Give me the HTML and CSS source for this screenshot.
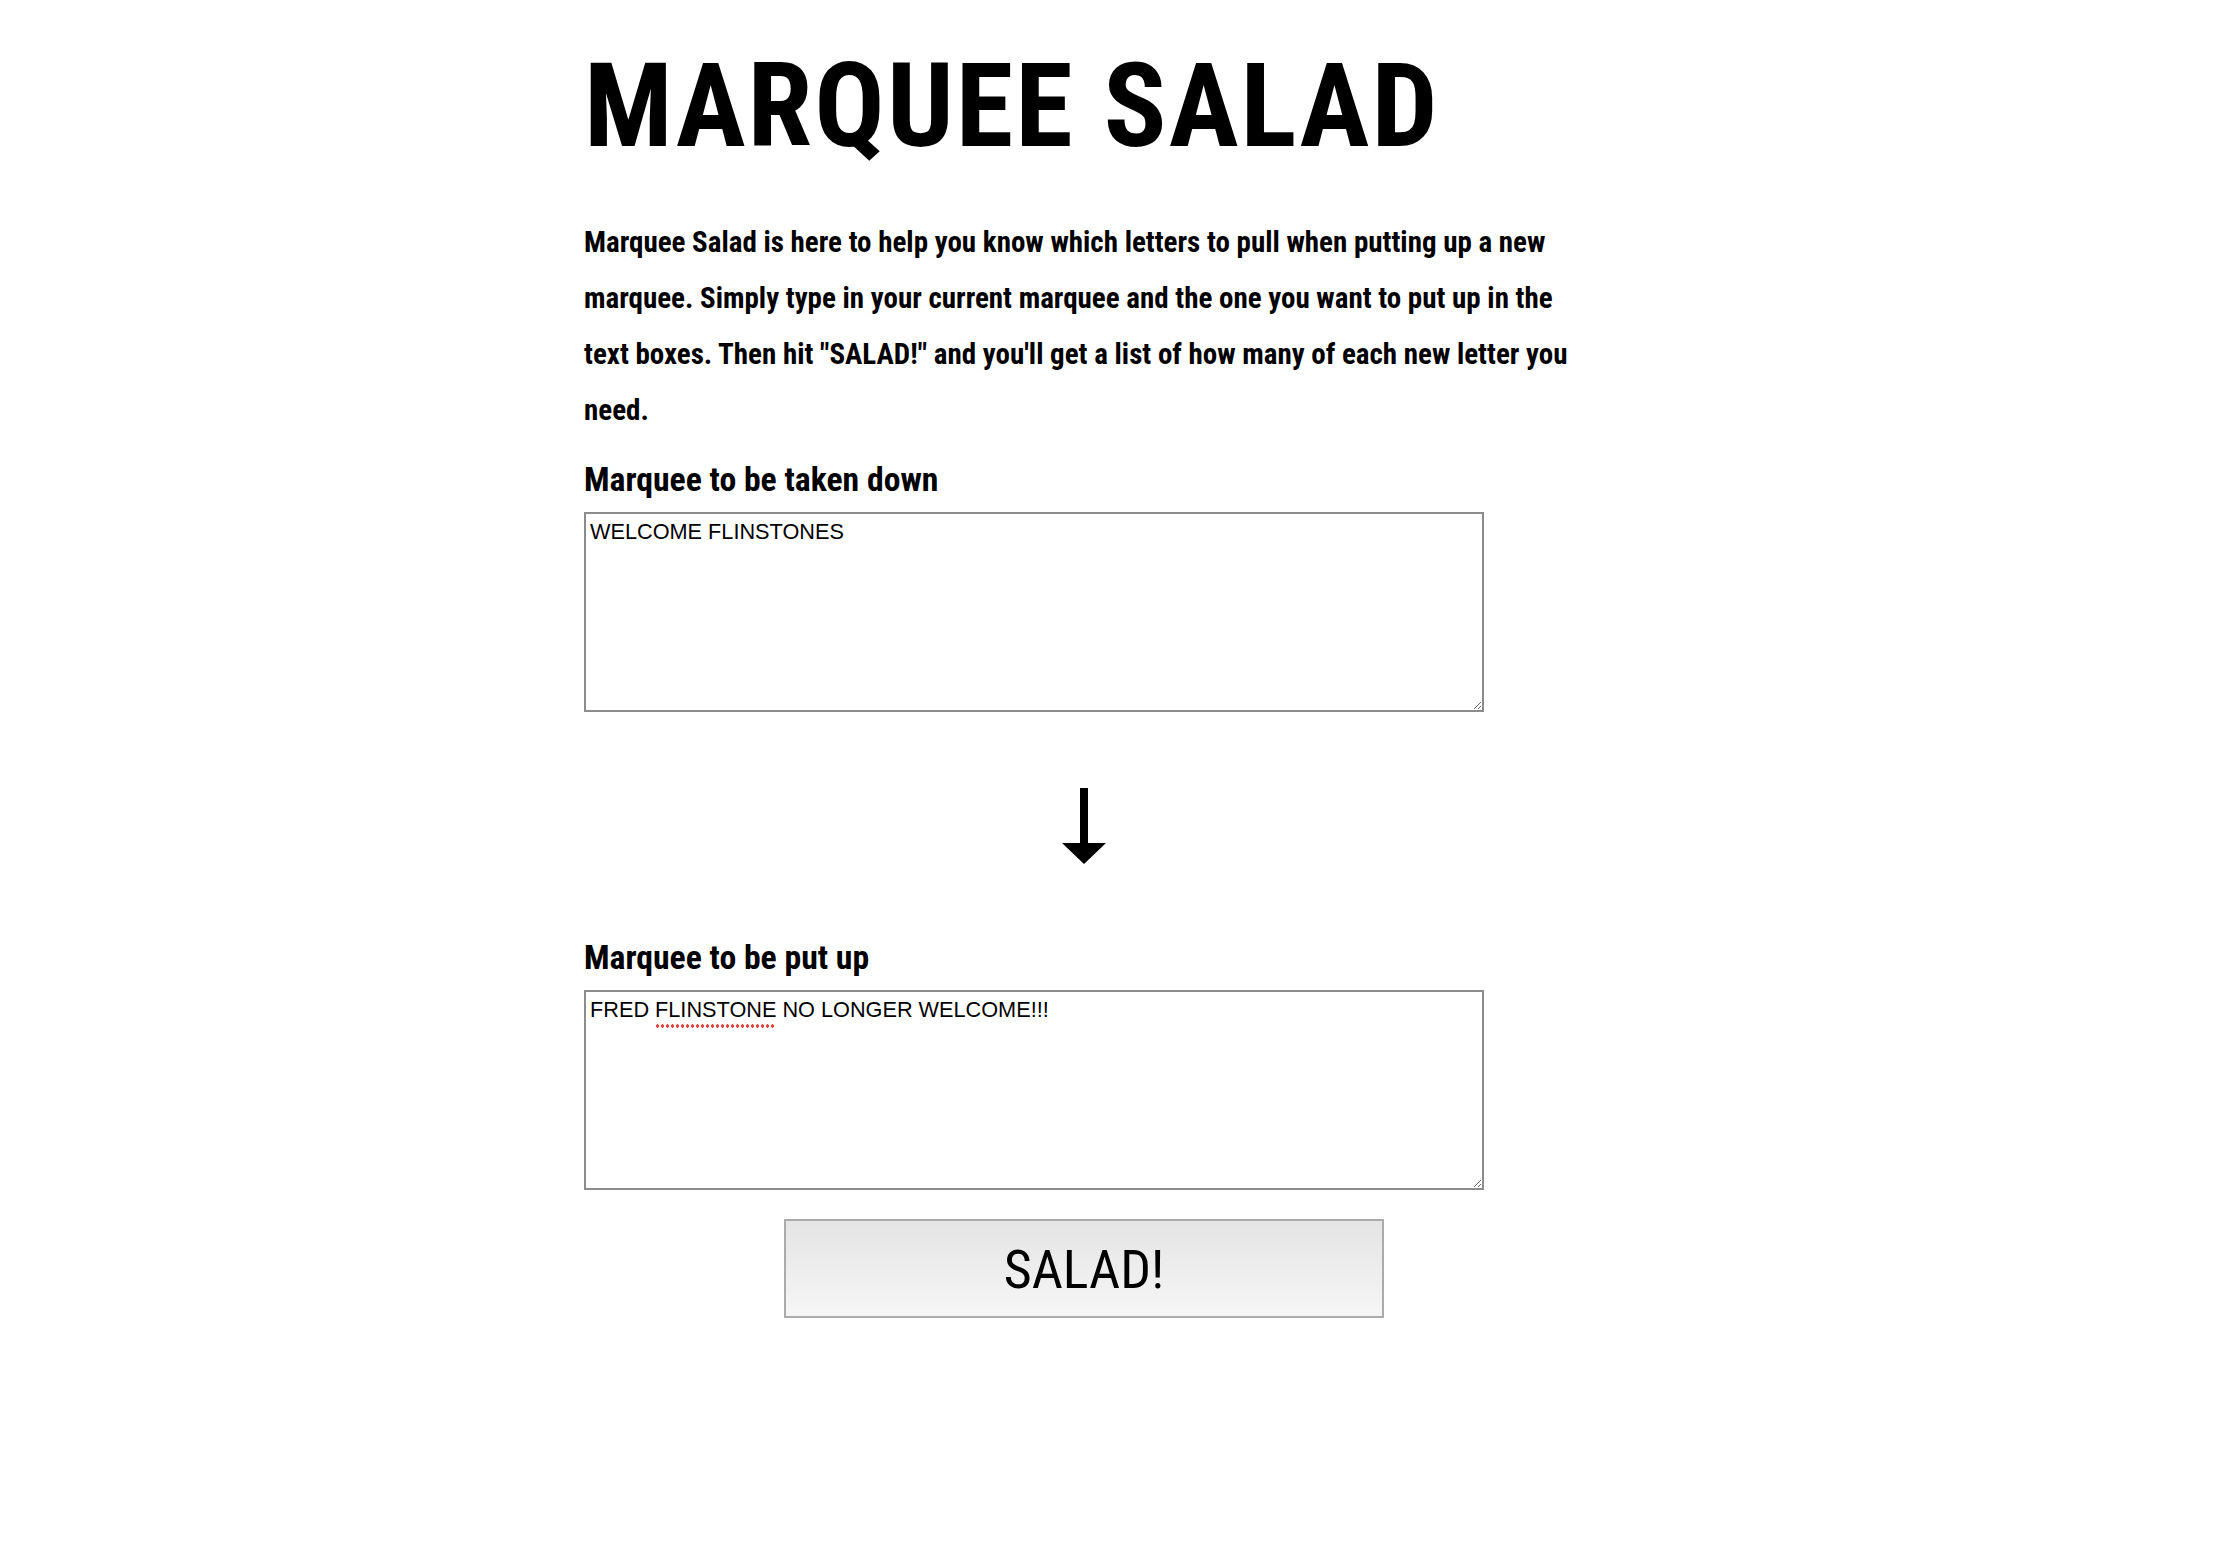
FILE: index.html
```html
<!DOCTYPE html>
<html lang="en">
<head>
<meta charset="utf-8">
<title>Marquee Salad</title>
<link rel="stylesheet" href="styles.css">
</head>
<body>
<main class="page">
  <h1 class="title">MARQUEE SALAD</h1>
  <p class="intro">Marquee Salad is here to help you know which letters to pull when putting up a new marquee. Simply type in your current marquee and the one you want to put up in the text boxes. Then hit "SALAD!" and you'll get a list of how many of each new letter you need.</p>

  <h2 class="label label-first">Marquee to be taken down</h2>
  <div class="box-wrap">
    <textarea class="box" spellcheck="false">WELCOME FLINSTONES</textarea>
  </div>

  <svg class="arrow" width="44" height="76" viewBox="0 0 44 76" aria-hidden="true">
    <rect x="18" y="0" width="8" height="56" fill="#000"/>
    <polygon points="0,55 44,55 22,76" fill="#000"/>
  </svg>

  <h2 class="label label-second">Marquee to be put up</h2>
  <div class="box-wrap">
    <textarea class="box" spellcheck="false">FRED FLINSTONE NO LONGER WELCOME!!!</textarea>
    <div class="spell-overlay" aria-hidden="true"><span class="ghost">FRED </span><span class="ghost misspelled">FLINSTONE</span></div>
  </div>

  <div class="actions">
    <button class="salad" type="button">SALAD!</button>
  </div>
</main>
</body>
</html>
```

FILE: styles.css
```css
html, body {
  margin: 0;
  padding: 0;
  background: #fff;
  color: #000;
}

.page {
  width: 1000px;
  margin-left: 584px;
  font-family: "Roboto Condensed", "Liberation Sans Narrow", "DejaVu Sans Condensed", sans-serif;
}

.title {
  margin: 48px 0 0 0;
  font-size: 117px;
  line-height: 117px;
  font-weight: 700;
  letter-spacing: 2px;
}

.intro {
  width: 1010px;
  margin: 49px 0 0 0;
  font-size: 29px;
  line-height: 56px;
  font-weight: 700;
}

.label {
  margin: 0;
  font-size: 33.7px;
  line-height: 40px;
  font-weight: 700;
}

.label-first {
  margin-top: 22px;
}

.label-second {
  margin-top: 74px;
}

.box-wrap {
  position: relative;
  width: 900px;
  margin-top: 12px;
}

.box {
  display: block;
  box-sizing: border-box;
  width: 900px;
  height: 200px;
  margin: 0;
  padding: 5px 4px 3px 4px;
  border: 2px solid #8c8c8c;
  border-radius: 0;
  background: #fff;
  color: #000;
  font-family: "Liberation Sans", Arial, sans-serif;
  font-size: 21.7px;
  line-height: normal;
  resize: both;
  outline: none;
}

.spell-overlay {
  position: absolute;
  left: 6px;
  top: 7px;
  font-family: "Liberation Sans", Arial, sans-serif;
  font-size: 21.7px;
  line-height: normal;
  white-space: pre;
  pointer-events: none;
}

.ghost {
  color: transparent;
}

.misspelled {
  display: inline-block;
  padding-bottom: 5px;
  background-image: radial-gradient(circle, #e0463f 1.5px, transparent 1.9px);
  background-size: 5px 4px;
  background-repeat: repeat-x;
  background-position: 0 100%;
}

.arrow {
  display: block;
  margin: 76px auto 0 auto;
}

.actions {
  display: flex;
  justify-content: center;
  margin-top: 29px;
}

.salad {
  box-sizing: border-box;
  width: 600px;
  height: 99px;
  margin: 0;
  padding: 2px 0 0 0;
  border: 2px solid #ababab;
  border-radius: 0;
  background: linear-gradient(#e4e4e4, #f6f6f6);
  color: #000;
  font-family: "Roboto Condensed", "Liberation Sans", sans-serif;
  font-size: 54px;
  font-weight: 400;
  cursor: pointer;
}
```
